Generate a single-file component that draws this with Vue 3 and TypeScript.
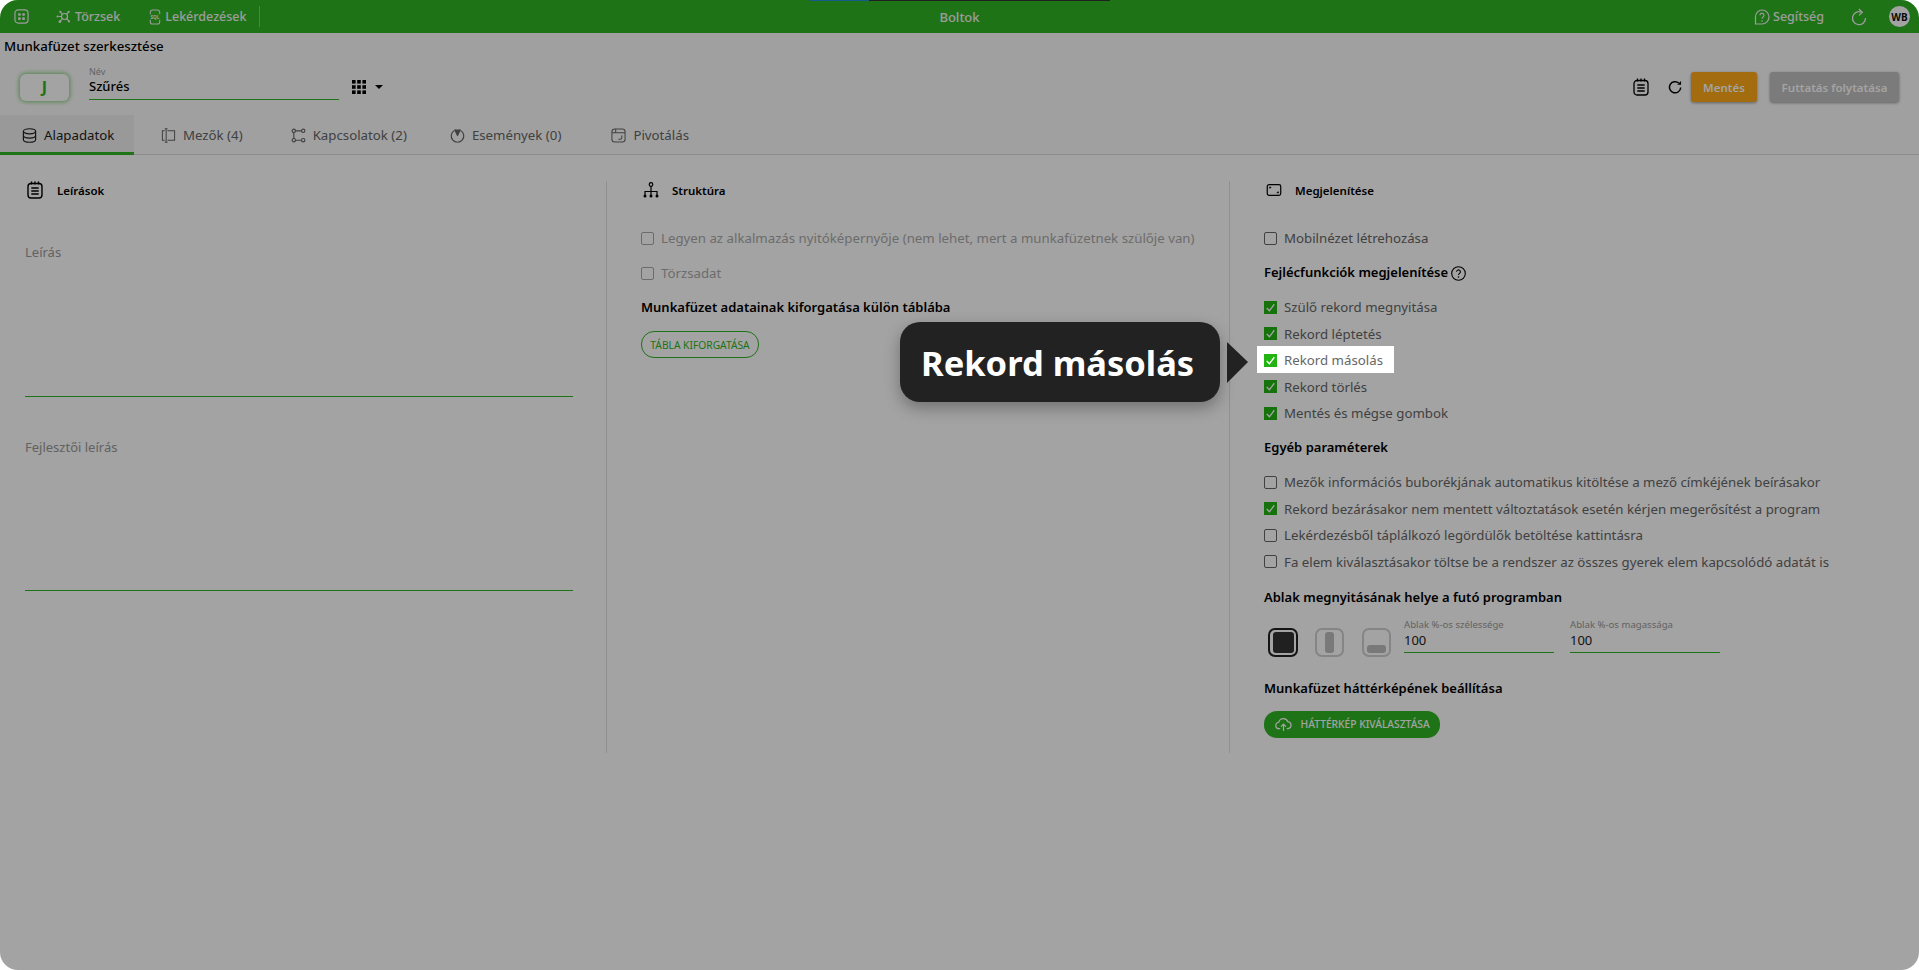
<script setup lang="ts">
const headerChecks = [
  { label: 'Szülő rekord megnyitása', hl: false },
  { label: 'Rekord léptetés', hl: false },
  { label: 'Rekord másolás', hl: true },
  { label: 'Rekord törlés', hl: false },
  { label: 'Mentés és mégse gombok', hl: false },
]

const otherChecks = [
  { label: 'Mezők információs buborékjának automatikus kitöltése a mező címkéjének beírásakor', on: false },
  { label: 'Rekord bezárásakor nem mentett változtatások esetén kérjen megerősítést a program', on: true },
  { label: 'Lekérdezésből táplálkozó legördülők betöltése kattintásra', on: false },
  { label: 'Fa elem kiválasztásakor töltse be a rendszer az összes gyerek elem kapcsolódó adatát is', on: false },
]
</script>

<template>
  <div class="frame">
    <header class="topbar">
      <div class="progress"><i class="blue"></i><i class="dark"></i></div>
      <div class="top-left">
        <svg class="i-grid" viewBox="0 0 16 16" fill="none" stroke="currentColor" stroke-width="1.3">
          <rect x="1" y="1" width="14" height="14" rx="3.5" />
          <g fill="currentColor" stroke="none">
            <rect x="4.4" y="4.4" width="2.8" height="2.8" rx=".8" />
            <rect x="8.8" y="4.4" width="2.8" height="2.8" rx=".8" />
            <rect x="4.4" y="8.8" width="2.8" height="2.8" rx=".8" />
            <rect x="8.8" y="8.8" width="2.8" height="2.8" rx=".8" />
          </g>
        </svg>
        <a class="nav nav-master">
          <svg viewBox="0 0 16 16" fill="none" stroke="currentColor" stroke-width="1.2">
            <circle cx="8.5" cy="7.5" r="3" />
            <path d="M6.3 5.3 4.6 3.2M10.7 5.3l1.7-2.1M10.7 9.7l2 2.3M6.3 9.7 4.2 12.2M5.5 7.5H2.6" />
            <g fill="currentColor" stroke="none">
              <circle cx="4.3" cy="2.8" r="1.1" />
              <circle cx="12.7" cy="2.8" r="1.1" />
              <circle cx="13" cy="12.4" r="1.1" />
              <circle cx="3.9" cy="12.7" r="1.4" />
              <circle cx="1.6" cy="7.5" r="1.1" />
            </g>
          </svg>
          Törzsek
        </a>
        <a class="nav nav-query">
          <svg viewBox="0 0 14 17" fill="none" stroke="currentColor" stroke-width="1.1">
            <path d="M2 5.5v-2A2.5 2.5 0 0 1 4.5 1h5A2.5 2.5 0 0 1 12 3.5v2M2 11.5v2A2.5 2.5 0 0 0 4.5 16h5a2.5 2.5 0 0 0 2.5-2.5v-2" />
            <text x="7" y="10.6" text-anchor="middle" font-size="5" font-weight="700" fill="currentColor" stroke="none">SQL</text>
          </svg>
          Lekérdezések
        </a>
        <span class="top-sep"></span>
      </div>
      <div class="top-title">Boltok</div>
      <div class="top-right">
        <a class="help">
          <svg viewBox="0 0 16 16" fill="none" stroke="currentColor" stroke-width="1.2">
            <path d="M8 1a7 7 0 0 1 0 14H1.5V8A6.5 7 0 0 1 8 1Z" />
            <path d="M6 6.2a2 2 0 1 1 3.1 1.7c-.8.5-1.1.9-1.1 1.8" />
            <circle cx="8" cy="12" r=".8" fill="currentColor" stroke="none" />
          </svg>
          Segítség
        </a>
        <svg class="i-refresh" viewBox="0 0 16 18" fill="none" stroke="currentColor" stroke-width="1.3">
          <path d="M10.5 4.2A6.5 6.5 0 1 0 14.5 10" />
          <path d="M7.8 1l3.5 3.2-3.2 3.200" />
        </svg>
        <span class="avatar">WB</span>
      </div>
    </header>

    <div class="head-area">
      <div class="page-title">Munkafüzet szerkesztése</div>
      <div class="toolbar">
        <div class="letter-box">J</div>
        <div class="name-field">
          <span class="small-label">Név</span>
          <span class="name-value">Szűrés</span>
        </div>
        <svg class="i-apps" viewBox="0 0 14 14" fill="currentColor">
          <rect x="0" y="0" width="3.6" height="3.6" /><rect x="5.2" y="0" width="3.6" height="3.6" /><rect x="10.4" y="0" width="3.6" height="3.6" />
          <rect x="0" y="5.2" width="3.6" height="3.6" /><rect x="5.2" y="5.2" width="3.6" height="3.6" /><rect x="10.4" y="5.2" width="3.6" height="3.6" />
          <rect x="0" y="10.4" width="3.6" height="3.6" /><rect x="5.2" y="10.4" width="3.6" height="3.6" /><rect x="10.4" y="10.4" width="3.6" height="3.6" />
        </svg>
        <span class="caret"></span>
        <div class="toolbar-right">
          <svg class="i-notes" viewBox="0 0 16 18" fill="none" stroke="currentColor" stroke-width="1.3">
            <rect x="1" y="2.5" width="14" height="14.5" rx="3" />
            <path d="M4.5.5v3M8 .5v3M11.5.5v3M4.3 7h7.4M4.3 10h7.4M4.3 13h7.4" />
          </svg>
          <svg class="i-reload" viewBox="0 0 15 15" fill="none" stroke="currentColor" stroke-width="1.6">
            <path d="M11.5 3.2A6 6 0 1 0 13.6 8" />
            <path d="M14 1v4.2H9.8Z" fill="currentColor" stroke="none" />
          </svg>
          <button class="btn-save">Mentés</button>
          <button class="btn-run">Futtatás folytatása</button>
        </div>
      </div>
      <nav class="tabs">
        <a class="tab active">
          <svg viewBox="0 0 16 16" fill="none" stroke="currentColor" stroke-width="1.3">
            <ellipse cx="8" cy="3.5" rx="6.5" ry="2.7" />
            <path d="M1.5 3.5v9c0 1.5 2.9 2.7 6.5 2.7s6.5-1.2 6.5-2.7v-9M1.5 8c0 1.5 2.9 2.700 6.5 2.700s6.5-1.200 6.5-2.700" />
          </svg>
          Alapadatok
        </a>
        <a class="tab t2">
          <svg viewBox="0 0 16 16" fill="none" stroke="currentColor" stroke-width="1.1">
            <path d="M4 3H1.5v10H4M7 3h7.5v10H7M5.5.8v14.4M4 .8h3M4 15.2h3" />
          </svg>
          Mezők (4)
        </a>
        <a class="tab t3">
          <svg viewBox="0 0 16 16" fill="none" stroke="currentColor" stroke-width="1.2">
            <circle cx="3" cy="3" r="1.8" /><circle cx="13" cy="3" r="1.8" /><circle cx="3" cy="13" r="1.8" /><circle cx="13" cy="13" r="1.8" />
            <path d="M4.8 3h6.4M3 4.8v6.4M4.8 13h6.4" />
          </svg>
          Kapcsolatok (2)
        </a>
        <a class="tab t4">
          <svg viewBox="0 0 16 16" fill="none" stroke="currentColor" stroke-width="1.3">
            <path d="M4.8 2.6a6.7 6.7 0 1 0 6.4 0" />
            <path d="M5 1.5 8 8l3-6.5" fill="currentColor" stroke-linejoin="round" />
          </svg>
          Események (0)
        </a>
        <a class="tab t5">
          <svg viewBox="0 0 16 16" fill="none" stroke="currentColor" stroke-width="1.1">
            <rect x="1" y="1" width="14" height="14" rx="3" />
            <path d="M1 5h14M5 1v4M11.5 8v2.5c0 1-.7 1.500-1.500 1.500H8" />
          </svg>
          Pivotálás
        </a>
      </nav>
    </div>

    <main class="columns">
      <section class="col col-a">
        <h3 class="col-title">
          <svg viewBox="0 0 16 18" fill="none" stroke="currentColor" stroke-width="1.4">
            <rect x="1" y="2.5" width="14" height="14.5" rx="3" />
            <path d="M4.5.5v3M8 .5v3M11.5.5v3M4.3 7h7.4M4.3 10h7.4M4.3 13h7.4" />
          </svg>
          Leírások
        </h3>
        <div class="area first"><span>Leírás</span></div>
        <div class="area"><span>Fejlesztői leírás</span></div>
      </section>

      <section class="col col-b">
        <h3 class="col-title">
          <svg viewBox="0 0 16 16" fill="none" stroke="currentColor" stroke-width="1.2">
            <circle cx="8" cy="2.5" r="1.8" />
            <path d="M8 4.3V10M2 13V9.5h12V13M8 10v3" />
            <g fill="currentColor" stroke="none">
              <circle cx="2" cy="14" r="1.5" /><circle cx="8" cy="14" r="1.5" /><circle cx="14" cy="14" r="1.5" />
            </g>
          </svg>
          Struktúra
        </h3>
        <label class="check muted first"><i class="box"></i>Legyen az alkalmazás nyitóképernyője (nem lehet, mert a munkafüzetnek szülője van)</label>
        <label class="check muted second"><i class="box"></i>Törzsadat</label>
        <h4 class="sub pivot">Munkafüzet adatainak kiforgatása külön táblába</h4>
        <button class="btn-outline">TÁBLA KIFORGATÁSA</button>
      </section>

      <section class="col col-c">
        <h3 class="col-title">
          <svg viewBox="0 0 16 13" fill="none" stroke="currentColor" stroke-width="1.3">
            <rect x=".7" y=".7" width="14.6" height="11.6" rx="2" />
            <path d="M3.5 5V3.5H5M12.5 8v1.5H11" />
          </svg>
          Megjelenítése
        </h3>
        <label class="check first"><i class="box"></i>Mobilnézet létrehozása</label>
        <h4 class="sub feat">Fejlécfunkciók megjelenítése
          <svg class="ic-help" viewBox="0 0 15 15" fill="none" stroke="currentColor" stroke-width="1.1">
            <circle cx="7.5" cy="7.5" r="6.8" />
            <path d="M5.6 5.8a1.9 1.9 0 1 1 2.9 1.6c-.7.5-1 .9-1 1.7" />
            <circle cx="7.5" cy="11" r=".8" fill="currentColor" stroke="none" />
          </svg>
        </h4>
        <div class="checks">
          <label v-for="c in headerChecks" :key="c.label" class="check" :class="{ lifted: c.hl }">
            <i class="box on">
              <svg viewBox="0 0 12 12" fill="none" stroke="#fff" stroke-width="1.2"><path d="M2.5 6.5 5 9l4.500-6" /></svg>
            </i>{{ c.label }}
          </label>
        </div>
        <h4 class="sub other">Egyéb paraméterek</h4>
        <div class="checks">
          <label v-for="c in otherChecks" :key="c.label" class="check">
            <i class="box" :class="{ on: c.on }">
              <svg v-if="c.on" viewBox="0 0 12 12" fill="none" stroke="#fff" stroke-width="1.2"><path d="M2.5 6.5 5 9l4.500-6" /></svg>
            </i>{{ c.label }}
          </label>
        </div>
        <h4 class="sub window">Ablak megnyitásának helye a futó programban</h4>
        <div class="window-row">
          <span class="win selected"><i class="full"></i></span>
          <span class="win middle"><i class="tall"></i></span>
          <span class="win"><i class="low"></i></span>
          <div class="num first">
            <span class="small-label">Ablak %-os szélessége</span>
            <span class="num-value">100</span>
          </div>
          <div class="num">
            <span class="small-label">Ablak %-os magassága</span>
            <span class="num-value">100</span>
          </div>
        </div>
        <h4 class="sub bg">Munkafüzet háttérképének beállítása</h4>
        <button class="btn-fill">
          <svg viewBox="0 0 18 16" fill="none" stroke="currentColor" stroke-width="1.3">
            <path d="M5.5 12.5h-1a3.500 3.500 0 0 1-.5-7A5 5 0 0 1 13.600 5a3.800 3.800 0 0 1 .4 7.500h-1.500" />
            <path d="M9 15V8M6.300 10.300 9 7.600l2.700 2.700" />
          </svg>
          HÁTTÉRKÉP KIVÁLASZTÁSA
        </button>
      </section>
    </main>

    <div class="dim"></div>

    <div class="tip">Rekord másolás</div>
    <span class="tip-arrow"></span>
  </div>
</template>

<style scoped>
.frame {
  position: relative;
  height: 970px;
  overflow: hidden;
  border-radius: 18px;
  background: #fff;
  color: #000;
  font-family: "Noto Sans", "Open Sans", sans-serif;
}

/* top bar */
.topbar {
  position: relative;
  display: flex;
  align-items: center;
  justify-content: space-between;
  height: 33px;
  background: #2fb425;
  color: #f4f4f4;
  font-size: 12.5px;
  font-weight: 500;
}

.progress {
  position: absolute;
  top: 0;
  left: 809px;
  display: flex;
  height: 1px;
}

.progress .blue {
  width: 60px;
  background: #1f8fd8;
}

.progress .dark {
  width: 241px;
  background: #333;
}

.top-left {
  display: flex;
  align-items: center;
}

.i-grid {
  width: 15px;
  height: 15px;
  margin-left: 14px;
}

.nav {
  display: flex;
  align-items: center;
  gap: 3px;
}

.nav svg {
  width: 16px;
  height: 16px;
}

.nav-master {
  margin-left: 27px;
}

.nav-query {
  margin-left: 28px;
}

.nav-query svg {
  width: 14px;
}

.top-sep {
  width: 1px;
  height: 21px;
  margin-left: 12px;
  background: rgba(255, 255, 255, 0.35);
}

.top-title {
  position: absolute;
  top: 0;
  left: 0;
  width: 100%;
  font-size: 13px;
  line-height: 34px;
  text-align: center;
  pointer-events: none;
}

.top-right {
  display: flex;
  align-items: center;
}

.help {
  display: flex;
  align-items: center;
  gap: 3px;
}

.help svg {
  width: 16px;
  height: 16px;
}

.i-refresh {
  width: 16px;
  height: 18px;
  margin-left: 27px;
}

.avatar {
  display: flex;
  align-items: center;
  justify-content: center;
  width: 21px;
  height: 21px;
  margin: 0 9px 0 22px;
  border-radius: 50%;
  background: #fff;
  color: #111;
  font-size: 10px;
  font-weight: 700;
}

/* page head */
.head-area {
  background: #fbfbfb;
}

.page-title {
  height: 27px;
  padding-left: 4px;
  font-size: 13.25px;
  font-weight: 500;
  line-height: 27px;
}

.toolbar {
  display: flex;
  align-items: center;
  height: 55px;
  box-sizing: border-box;
  padding: 0 20px 1px;
}

.letter-box {
  display: flex;
  align-items: center;
  justify-content: center;
  width: 49px;
  height: 27px;
  border-radius: 6px;
  background: #fff;
  box-shadow: 0 0 4px 1px rgba(47, 180, 37, 0.6);
  color: #2fb425;
  font-size: 16px;
  font-weight: 700;
}

.name-field {
  display: flex;
  flex-direction: column;
  align-self: flex-start;
  width: 250px;
  height: 33px;
  margin: 6px 0 0 20px;
  border-bottom: 1px solid #2fb425;
}

.small-label {
  font-size: 9px;
  line-height: 11px;
  color: #9a9a9a;
}

.name-value {
  margin-top: 1px;
  font-size: 13px;
  font-weight: 500;
  line-height: 17px;
}

.i-apps {
  width: 14px;
  height: 14px;
  margin-left: 13px;
}

.caret {
  width: 0;
  height: 0;
  margin-left: 9px;
  border: 4px solid transparent;
  border-top: 4px solid #000;
  border-bottom: 0;
}

.toolbar-right {
  display: flex;
  align-items: center;
  margin-left: auto;
}

.i-notes {
  width: 16px;
  height: 18px;
  margin-right: -1px;
}

.i-reload {
  width: 14px;
  height: 14px;
  margin-left: 20px;
}

.btn-save,
.btn-run {
  height: 30px;
  border: 0;
  border-radius: 3px;
  color: #fff;
  font-family: inherit;
  font-size: 11.5px;
  font-weight: 600;
  box-shadow: 0 1px 3px rgba(0, 0, 0, 0.4);
}

.btn-save {
  width: 66px;
  margin-left: 9px;
  background: #fda918;
}

.btn-run {
  width: 129px;
  margin-left: 13px;
  background: #c0c0c0;
}

/* tabs */
.tabs {
  display: flex;
  height: 40px;
  box-sizing: border-box;
  border-bottom: 1px solid #dcdcdc;
  background: #fbfbfb;
  color: #666;
  font-size: 13.25px;
}

.tab {
  display: flex;
  align-items: center;
  gap: 7px;
  height: 40px;
  box-sizing: border-box;
}

.tab svg {
  width: 15px;
  height: 15px;
  flex: none;
}

.tab.active {
  width: 134px;
  padding: 3px 0 0 22px;
  border-bottom: 3px solid #2fb425;
  background: #f0f0f0;
  color: #222;
}

.t2 {
  margin-left: 27px;
}

.t3 {
  margin-left: 48px;
}

.t4 {
  margin-left: 43px;
}

.t5 {
  margin-left: 50px;
}

/* content */
.columns {
  display: grid;
  grid-template-columns: 606px 623px 1fr;
  padding-top: 26px;
}

.col {
  height: 572px;
  box-sizing: border-box;
  border-left: 1px solid #e2e2e2;
}

.col-a {
  padding-left: 25px;
  border-left: 0;
}

.col-b {
  padding-left: 34px;
}

.col-c {
  padding-left: 34px;
}

.col-title {
  display: flex;
  align-items: center;
  height: 18px;
  margin: 0;
  font-size: 11.5px;
  font-weight: 600;
}

.col-a .col-title svg {
  width: 16px;
  height: 18px;
  margin: 0 14px 0 2px;
}

.col-b .col-title svg {
  width: 16px;
  height: 16px;
  margin: 0 13px 0 2px;
}

.col-c .col-title svg {
  width: 16px;
  height: 12px;
  margin: 0 13px 0 2px;
}

.area {
  width: 548px;
  height: 153px;
  margin-top: 41px;
  box-sizing: border-box;
  border-bottom: 1px solid #2fb425;
  color: #999;
  font-size: 13px;
}

.area.first {
  height: 154px;
  margin-top: 44px;
}

.area span {
  display: block;
  line-height: 18px;
}

.check {
  display: flex;
  align-items: center;
  gap: 7px;
  height: 16px;
  color: #666;
  font-size: 13.25px;
  white-space: nowrap;
}

.check.muted {
  color: #aaa;
}

.check.first {
  margin-top: 31px;
}

.check.second {
  margin-top: 19px;
}

.box {
  display: block;
  width: 13px;
  height: 13px;
  flex: none;
  box-sizing: border-box;
  border: 1px solid #666;
  border-radius: 2px;
}

.muted .box {
  border-color: #aaa;
}

.box.on {
  border: 0;
  border-radius: 0;
  background: #23b414;
}

.box.on svg {
  display: block;
  width: 13px;
  height: 13px;
}

.checks {
  display: flex;
  flex-direction: column;
  gap: 10.5px;
  margin-top: 19px;
}

.lifted {
  position: relative;
  z-index: 3;
  width: fit-content;
}

.lifted::before {
  content: "";
  position: absolute;
  z-index: -1;
  top: -6px;
  right: -11px;
  bottom: -5px;
  left: -7px;
  background: #fff;
}

.sub {
  display: flex;
  align-items: center;
  gap: 3px;
  height: 16px;
  margin: 0;
  font-size: 13px;
  font-weight: 600;
}

.sub.pivot {
  margin-top: 18px;
}

.sub.feat {
  margin-top: 18px;
}

.sub.other {
  margin-top: 18px;
}

.sub.window {
  margin-top: 19px;
}

.sub.bg {
  margin-top: 25px;
}

.ic-help {
  width: 15px;
  height: 15px;
  margin-top: 2px;
}

.btn-outline {
  display: block;
  width: 118px;
  height: 27px;
  margin-top: 16px;
  padding: 0;
  border: 1px solid #2fb425;
  border-radius: 13px;
  background: #fff;
  color: #2fb425;
  font-family: inherit;
  font-size: 10.25px;
}

.window-row {
  display: flex;
  align-items: flex-start;
  height: 36px;
  margin-top: 14px;
}

.win {
  display: flex;
  align-items: center;
  justify-content: center;
  width: 29px;
  height: 29px;
  margin-top: 9px;
  box-sizing: border-box;
  border: 2px solid #d0d0d0;
  border-radius: 7px;
}

.win.selected {
  width: 30px;
  margin-right: 17px;
  margin-left: 4px;
  border-color: #222;
}

.win.middle {
  margin-right: 18px;
}

.win i {
  display: block;
  border-radius: 3px;
  background: #bebebe;
}

.win .full {
  width: 21px;
  height: 21px;
  background: #333;
}

.win .tall {
  width: 9px;
  height: 21px;
}

.win .low {
  width: 19px;
  height: 8px;
  margin-top: 13px;
}

.num {
  display: flex;
  flex-direction: column;
  width: 150px;
  height: 33px;
  margin-left: 16px;
  border-bottom: 1px solid #2fb425;
}

.num.first {
  margin-left: 13px;
}

.num .small-label {
  font-size: 9.6px;
}

.num-value {
  font-size: 13px;
  line-height: 20px;
  color: #222;
}

.btn-fill {
  display: flex;
  align-items: center;
  gap: 8.5px;
  width: 176px;
  height: 27px;
  margin-top: 15px;
  padding: 0 0 0 11px;
  border: 0;
  border-radius: 13px;
  background: #2fb425;
  color: #fff;
  font-family: inherit;
  font-size: 10.25px;
  font-weight: 500;
  white-space: nowrap;
}

.btn-fill svg {
  width: 17px;
  height: 15px;
  flex: none;
}

/* overlay */
.dim {
  position: absolute;
  inset: 0;
  z-index: 2;
  background: rgba(0, 0, 0, 0.36);
}

.tip {
  position: absolute;
  z-index: 4;
  top: 322px;
  left: 900px;
  width: 320px;
  height: 80px;
  box-sizing: border-box;
  padding-left: 21px;
  border-radius: 20px;
  background: #222;
  box-shadow: 0 6px 16px rgba(0, 0, 0, 0.3);
  color: #fff;
  font-size: 34.5px;
  font-weight: 700;
  line-height: 82px;
  white-space: nowrap;
}

.tip-arrow {
  position: absolute;
  z-index: 4;
  top: 342px;
  left: 1227px;
  width: 0;
  height: 0;
  border-top: 20px solid transparent;
  border-bottom: 21px solid transparent;
  border-left: 21px solid #222;
}
</style>

<style>
html,
body {
  background: #fff;
}
</style>
